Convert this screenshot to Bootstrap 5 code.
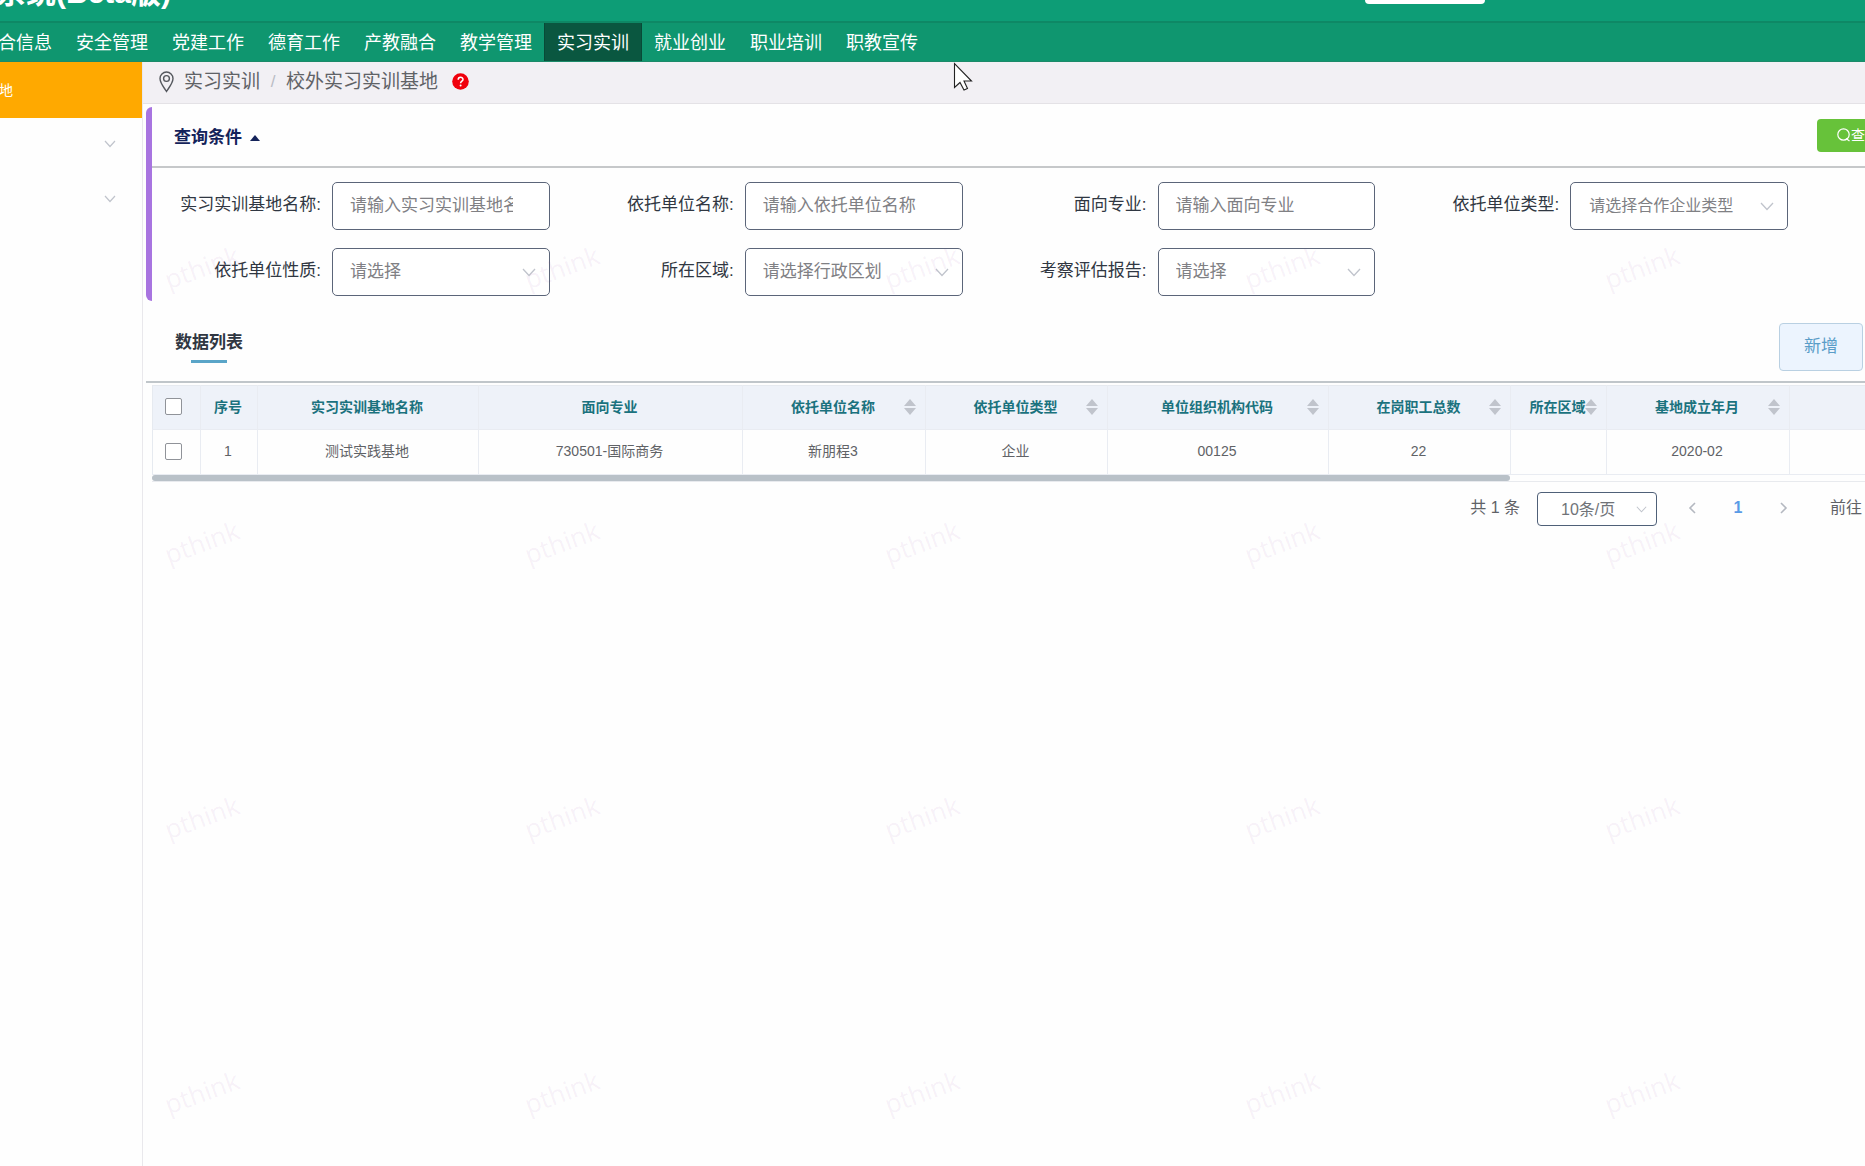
<!DOCTYPE html>
<html lang="zh-CN">
<head>
<meta charset="utf-8">
<meta name="viewport" content="width=device-width, initial-scale=1">
<title>校外实习实训基地</title>
<link href="https://cdn.jsdelivr.net/npm/bootstrap@5.3.0/dist/css/bootstrap.min.css" rel="stylesheet">
<style>
  body { font-family: "Liberation Sans", "Noto Sans CJK SC", sans-serif; font-size: 17px; line-height: 24px; color: #303742; background: #fefefe; overflow: hidden; min-height: 100vh; }
  .topbar { height: 21px; background: #0d9d76; overflow: hidden; }
  .brand-title { width: 171px; height: 8px; flex: none; color: #fff; font-size: 30px; line-height: 30px; font-weight: 700; white-space: nowrap; }
  .top-search { width: 120px; height: 4px; margin-right: 380px; background: #fff; border-radius: 0 0 4px 4px; }
  .mainnav { height: 41px; border-top: 2px solid #0e8865; border-bottom: 1px solid #1c8a69; background: #0f966f; margin: 0; padding: 0; flex-wrap: nowrap; overflow: hidden; }
  .mainnav ul { margin-left: -32px; }
  .mainnav a { display: block; height: 38px; padding: 0 12px; font-size: 18px; line-height: 40px; color: #fff; text-decoration: none; white-space: nowrap; }
  .mainnav a.current { background: #0a5740; border: 1px solid #084a37; border-width: 0 1px; }
  .sidebar { width: 143px; flex: none; border-right: 1px solid #e9e8ec; background: #fefefe; }
  .side-item { display: flex; align-items: center; height: 55px; padding: 0 26px 4px 0; justify-content: flex-end; color: #c0c4cc; }
  .side-item.current { height: 56px; width: 142px; padding-bottom: 0; background: #ffa900; color: #fff; font-size: 14px; justify-content: flex-start; text-decoration: none; }
  .side-item.current span { margin-left: -99px; white-space: nowrap; }
  .shell { min-height: calc(100vh - 62px); }
  .crumbs { height: 42px; background: #f2f0f4; border-bottom: 1px solid #e4e2e6; padding: 0 0 2px 16px; font-size: 19px; color: #606266; }
  .crumbs a { color: #606266; text-decoration: none; margin-left: 2px; }
  .crumbs .sep { width: 26px; text-align: center; color: #b9bcc4; font-size: 17px; }
  .crumbs .help { margin-left: 14px; }
  .query { margin: 3px 0 0 3px; border-left: 6px solid #a874e0; border-radius: 6px 0 0 6px; height: 194px; }
  .query-head { height: 61px; padding-left: 22px; border-bottom: 2px solid #c6c8ca; }
  .query-toggle { border: 0; background: none; padding: 2px 0 0; color: #14235a; font-weight: 700; }
  .search-btn { width: 92px; height: 33px; margin-right: -44px; margin-top: -3px; padding: 0 0 0 20px; border: 0; border-radius: 4px; background: #67c23a; color: #fff; font-size: 14px; line-height: 33px; white-space: nowrap; overflow: hidden; }
  .query-form { padding: 14px 62px 0 0; row-gap: 18px; }
  .field { width: 25%; gap: 10px; padding-right: 15px; }
  .field label { width: 170px; flex: none; text-align: right; white-space: nowrap; padding: 0 1px 3px 0; }
  .field .form-control, .field .form-select { flex: 1; min-width: 0; height: 48px; padding: 0 36px 0 17px; border: 1px solid #5b6579; border-radius: 5px; font-size: 17px; color: #808084; background-color: #fff; }
  .field .form-control::placeholder { color: #808084; }
  .form-select { background-image: url("data:image/svg+xml,%3Csvg xmlns='http://www.w3.org/2000/svg' viewBox='0 0 14 9'%3E%3Cpath fill='none' stroke='%23c0c4cc' stroke-width='1.3' d='M1 1l6 6.5L13 1'/%3E%3C/svg%3E"); background-size: 14px 9px; background-position: right 13px center; }
  .field .form-select.compact { font-size: 16px; padding-left: 18px; }
  .list-head { height: 82px; margin-left: 3px; padding: 0 2px 0 29px; border-bottom: 2px solid #c0c6ca; }
  .list-head h2 { font-size: 17px; line-height: 24px; margin: 11px 0 0; font-weight: 700; color: #303742; text-align: center; }
  .list-head h2::after { content: ""; display: block; width: 36px; height: 3px; margin: 5px auto 0; background: #5aa5c8; }
  .add-btn { width: 84px; height: 48px; margin-top: 12px; border: 1px solid #b9d0e2; border-radius: 4px; background: #ecf4fe; color: #5a9dc8; font-size: 17px; padding: 0; }
  .grid-wrap { margin: 2px 0 0 9px; overflow: hidden; border-bottom: 1px solid #e8eaee; }
  .grid-table { width: 1859px; table-layout: fixed; margin: 0; font-size: 14px; line-height: 20px; text-align: center; border-top: 1px solid #e6eaf0; border-left: 1px solid #e6eaf0; }
  .grid-table > :not(caption) > * > * { height: 45px; padding: 0 2px 2px 0; vertical-align: middle; border: 0 solid #e9ecf2; border-width: 0 1px 1px 0; color: #606266; background: transparent; }
  .grid-table > thead > tr > th { height: 44px; background: #eef2f9; color: #1b727e; position: relative; font-weight: 700; }
  .grid-table .form-check-input { display: block; width: 17px; height: 17px; margin: 0 0 0 12px; border: 1px solid #909399; border-radius: 2px; }
  .sorter { position: absolute; right: 9px; top: 13px; width: 12px; height: 16px; fill: #c0c4cc; }
  .hscroll { width: 79.3%; height: 6px; border-radius: 3px; background: #b9c1c8; }
  .pager { padding: 8px 3px 0 0; font-size: 16px; color: #606266; height: 44px; }
  .pager .form-select { width: 120px; height: 34px; margin-left: 17px; padding: 2px 30px 0 23px; border: 1px solid #4f6078; border-radius: 4px; font-size: 16px; line-height: 24px; color: #707378; background-color: #fff; background-size: 11px 7px; background-position: right 9px center; margin-top: 2px; }
  .pager nav { margin: 0 23px 0 12px; }
  .pager nav button { width: 46px; height: 28px; padding: 0; border: 0; background: none; color: #b4b8c0; font-size: 16px; font-weight: 700; display: flex; align-items: center; justify-content: center; }
  .pager nav button.current { color: #5a9be6; }
  .stamps { position: absolute; left: 22px; top: 129px; bottom: 0; width: 1800px; overflow: hidden; display: grid; grid-template-columns: repeat(5, 360px); grid-auto-rows: 275px; align-content: start; place-items: center; pointer-events: none; font: 500 26px/30px "Open Sans", sans-serif; color: rgba(150, 70, 160, .075); }
  .stamps span { transform: rotate(-20deg); }
  .pointer { position: absolute; left: 953px; top: 62px; width: 20px; height: 29px; }
</style>
<script src="https://cdn.jsdelivr.net/npm/bootstrap@5.3.0/dist/js/bootstrap.bundle.min.js"></script>
</head>
<body class="position-relative">
<header>
  <div class="topbar d-flex justify-content-between align-items-start">
    <div class="brand-title d-flex justify-content-end align-items-end"><span>系统(Beta版)</span></div>
    <div class="top-search"></div>
  </div>
  <nav class="mainnav navbar" aria-label="主导航">
    <ul class="list-unstyled d-flex mb-0">
      <li><a href="#">综合信息</a></li>
      <li><a href="#">安全管理</a></li>
      <li><a href="#">党建工作</a></li>
      <li><a href="#">德育工作</a></li>
      <li><a href="#">产教融合</a></li>
      <li><a href="#">教学管理</a></li>
      <li><a href="#" class="current" aria-current="page">实习实训</a></li>
      <li><a href="#">就业创业</a></li>
      <li><a href="#">职业培训</a></li>
      <li><a href="#">职教宣传</a></li>
    </ul>
  </nav>
</header>
<div class="shell d-flex">
  <aside class="sidebar overflow-hidden">
    <a href="#" class="side-item current"><span>校外实习实训基地</span></a>
    <div class="side-item"><svg width="12" height="8" viewBox="0 0 12 8" fill="none" stroke="currentColor" stroke-width="1.2"><path d="M1 1l5 5.5L11 1"/></svg></div>
    <div class="side-item"><svg width="12" height="8" viewBox="0 0 12 8" fill="none" stroke="currentColor" stroke-width="1.2"><path d="M1 1l5 5.5L11 1"/></svg></div>
  </aside>
  <main class="flex-grow-1 overflow-hidden">
    <div class="crumbs d-flex align-items-center">
      <svg width="15" height="22" viewBox="0 0 15 22" fill="none" stroke="#55585e" stroke-width="1.4" class="me-2"><path d="M7.5 20.5C5 16.5 1 12 1 7.500a6.500 6.500 0 0 1 13 0c0 4.500-4 9-6.500 13z"/><circle cx="7.500" cy="7.500" r="2.900"/></svg>
      <a href="#">实习实训</a><span class="sep">/</span><span>校外实习实训基地</span>
      <svg class="help" width="17" height="17" viewBox="0 0 17 17"><circle cx="8.500" cy="8.500" r="8.300" fill="#f0000c"/><path d="M6.200 6.800c0-3.200 4.800-3.200 4.800-.3 0 1.700-2.400 1.700-2.400 3.700" fill="none" stroke="#fff" stroke-width="1.500"/><circle cx="8.600" cy="12.500" r="1" fill="#fff"/></svg>
    </div>
    <section class="query">
      <div class="query-head d-flex justify-content-between align-items-center">
        <button type="button" class="query-toggle d-flex align-items-center">查询条件<svg class="ms-2" width="10" height="6" viewBox="0 0 10 6"><path d="M5 0l5 6H0z" fill="#14235a"/></svg></button>
        <button type="button" class="search-btn d-flex align-items-center"><svg class="flex-shrink-0" width="14" height="14" viewBox="0 0 14 14" fill="none" stroke="#fff" stroke-width="1.200"><circle cx="6.500" cy="6.500" r="5.700"/><path d="M9 10.500l3.500 2.500"/></svg>查询</button>
      </div>
      <form class="query-form d-flex flex-wrap">
        <div class="field d-flex align-items-center"><label for="f1">实习实训基地名称:</label><input id="f1" class="form-control" placeholder="请输入实习实训基地名称"></div>
        <div class="field d-flex align-items-center"><label for="f2">依托单位名称:</label><input id="f2" class="form-control" placeholder="请输入依托单位名称"></div>
        <div class="field d-flex align-items-center"><label for="f3">面向专业:</label><input id="f3" class="form-control" placeholder="请输入面向专业"></div>
        <div class="field d-flex align-items-center"><label for="f4">依托单位类型:</label><select id="f4" class="form-select compact"><option>请选择合作企业类型</option></select></div>
        <div class="field d-flex align-items-center"><label for="f5">依托单位性质:</label><select id="f5" class="form-select"><option>请选择</option></select></div>
        <div class="field d-flex align-items-center"><label for="f6">所在区域:</label><select id="f6" class="form-select"><option>请选择行政区划</option></select></div>
        <div class="field d-flex align-items-center"><label for="f7">考察评估报告:</label><select id="f7" class="form-select"><option>请选择</option></select></div>
      </form>
    </section>
    <div class="list-head d-flex justify-content-between align-items-center">
      <h2>数据列表</h2>
      <button type="button" class="add-btn">新增</button>
    </div>
    <div class="grid-wrap">
      <table class="table grid-table">
        <colgroup><col style="width:48px"><col style="width:57px"><col style="width:221px"><col style="width:264px"><col style="width:183px"><col style="width:182px"><col style="width:221px"><col style="width:182px"><col style="width:96px"><col style="width:183px"><col style="width:222px"></colgroup>
        <thead>
          <tr>
            <th><input type="checkbox" class="form-check-input" aria-label="全选"></th>
            <th>序号</th>
            <th>实习实训基地名称</th>
            <th>面向专业</th>
            <th>依托单位名称<svg class="sorter" viewBox="0 0 12 16"><path d="M6 0l6 7H0zM0 9h12l-6 7z"/></svg></th>
            <th>依托单位类型<svg class="sorter" viewBox="0 0 12 16"><path d="M6 0l6 7H0zM0 9h12l-6 7z"/></svg></th>
            <th>单位组织机构代码<svg class="sorter" viewBox="0 0 12 16"><path d="M6 0l6 7H0zM0 9h12l-6 7z"/></svg></th>
            <th>在岗职工总数<svg class="sorter" viewBox="0 0 12 16"><path d="M6 0l6 7H0zM0 9h12l-6 7z"/></svg></th>
            <th>所在区域<svg class="sorter" viewBox="0 0 12 16"><path d="M6 0l6 7H0zM0 9h12l-6 7z"/></svg></th>
            <th>基地成立年月<svg class="sorter" viewBox="0 0 12 16"><path d="M6 0l6 7H0zM0 9h12l-6 7z"/></svg></th>
            <th></th>
          </tr>
        </thead>
        <tbody>
          <tr>
            <td><input type="checkbox" class="form-check-input" aria-label="选择第1行"></td>
            <td>1</td><td>测试实践基地</td><td>730501-国际商务</td><td>新朋程3</td><td>企业</td><td>00125</td><td>22</td><td></td><td>2020-02</td><td></td>
          </tr>
        </tbody>
      </table>
      <div class="hscroll"></div>
    </div>
    <div class="pager d-flex justify-content-end align-items-center">
      <span>共 1 条</span>
      <select class="form-select" aria-label="每页条数"><option>10条/页</option></select>
      <nav class="d-flex" aria-label="分页">
        <button type="button" aria-label="上一页"><svg width="8" height="12" viewBox="0 0 8 12" fill="none" stroke="currentColor" stroke-width="1.600"><path d="M7 1L2 6l5 5"/></svg></button>
        <button type="button" class="current">1</button>
        <button type="button" aria-label="下一页"><svg width="8" height="12" viewBox="0 0 8 12" fill="none" stroke="currentColor" stroke-width="1.600"><path d="M1 1l5 5-5 5"/></svg></button>
      </nav>
      <span>前往</span>
    </div>
  </main>
</div>
<div class="stamps" aria-hidden="true">
  <span>pthink</span><span>pthink</span><span>pthink</span><span>pthink</span><span>pthink</span>
  <span>pthink</span><span>pthink</span><span>pthink</span><span>pthink</span><span>pthink</span>
  <span>pthink</span><span>pthink</span><span>pthink</span><span>pthink</span><span>pthink</span>
  <span>pthink</span><span>pthink</span><span>pthink</span><span>pthink</span><span>pthink</span>
</div>
<svg class="pointer" viewBox="0 0 20 29"><path d="M1.500 1.500v24l5.500-5 4 7.500 3.500-1.500-3.500-7.500h7.500z" fill="#fff" stroke="#222" stroke-width="1.100"/></svg>
</body>
</html>
